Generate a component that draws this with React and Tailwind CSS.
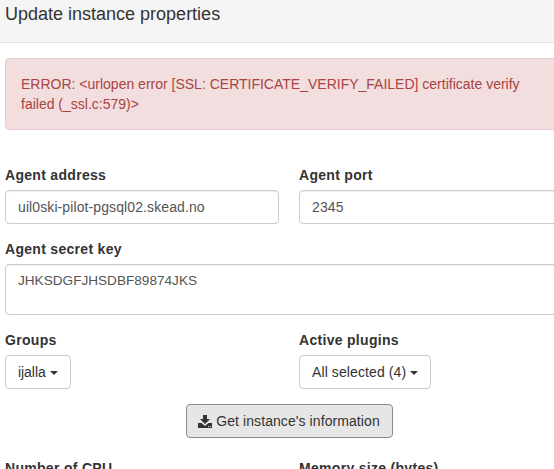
import React from 'react';

const Caret = () => (
  <span className="inline-block align-middle w-0 h-0 border-x-4 border-x-transparent border-t-4 border-t-[#333]" />
);

const SaveIcon = () => (
  <svg width="14" height="13" viewBox="0 0 14 13" className="mr-[4px] -ml-[1px]" fill="#333">
    <path d="M5 0h4v4h3L7 9 2 4h3z" />
    <path d="M0 8h3.5L7 11l3.5-3H14v5H0z" />
    <rect x="10" y="11" width="1" height="1" fill="#e6e6e6" />
    <rect x="12" y="11" width="1" height="1" fill="#e6e6e6" />
  </svg>
);

function Field({ label, value }) {
  return (
    <div>
      <label className="block mb-[5px] text-sm leading-5 font-bold tracking-[0.3px] text-[#333]">{label}</label>
      <input
        readOnly
        value={value}
        className="block w-full h-[34px] px-3 py-1.5 text-sm tracking-[0.1px] text-[#555] bg-white border border-[#ccc] rounded shadow-[inset_0_1px_1px_rgba(0,0,0,0.075)] outline-none"
      />
    </div>
  );
}

function Dropdown({ label, value, className }) {
  return (
    <div>
      <label className="block mb-[5px] text-sm leading-5 font-bold tracking-[0.3px] text-[#333]">{label}</label>
      <button className={`h-[34px] px-3 text-sm text-[#333] bg-white border border-[#ccc] rounded ${className}`}>
        {value} <Caret />
      </button>
    </div>
  );
}

export default function App() {
  return (
    <div className="w-[554px] h-[469px] overflow-hidden bg-white font-['Liberation_Sans',Arial,sans-serif]">
      <div className="h-[43px] px-[5px] pt-[3px] bg-[#f5f5f5] border-b border-[#e3e3e3] text-lg leading-[22px] text-[#333]">
        Update instance properties
      </div>

      <div className="w-[568px] ml-[5px]">
        <div className="mt-[15px] pl-[15px] pr-[40px] py-[15px] text-sm leading-5 text-[#a94442] bg-[#f2dede] border border-[#ebccd1] rounded">
          ERROR: &lt;urlopen error [SSL: CERTIFICATE_VERIFY_FAILED] certificate verify failed (_ssl.c:579)&gt;
        </div>

        <div className="mt-[35px] grid grid-cols-2 gap-x-5">
          <Field label="Agent address" value="uil0ski-pilot-pgsql02.skead.no" />
          <Field label="Agent port" value="2345" />
        </div>

        <div className="mt-[15px]">
          <label className="block mb-[5px] text-sm leading-5 font-bold tracking-[0.3px] text-[#333]">Agent secret key</label>
          <textarea
            readOnly
            value="JHKSDGFJHSDBF89874JKS"
            className="block w-full h-[51px] px-3 py-1.5 text-[13.6px] leading-5 text-[#555] bg-white border border-[#ccc] rounded shadow-[inset_0_1px_1px_rgba(0,0,0,0.075)] outline-none resize-none"
          />
        </div>

        <div className="mt-[15px] grid grid-cols-2 gap-x-5">
          <Dropdown label="Groups" value="ijalla" className="tracking-[-0.05px]" />
          <Dropdown label="Active plugins" value="All selected (4)" className="tracking-[0.1px]" />
        </div>
      </div>

      <div className="mt-[15px] flex justify-center w-[579px]">
        <button className="flex items-center h-[34px] px-3 text-sm tracking-[0.08px] text-[#333] bg-[#e6e6e6] border border-[#8c8c8c] rounded">
          <SaveIcon />
          Get instance's information
        </button>
      </div>

      <div className="w-[568px] ml-[5px] mt-5 grid grid-cols-2 gap-x-5">
        <label className="block text-sm leading-5 font-bold tracking-[0.3px] text-[#333]">Number of CPU</label>
        <label className="block text-sm leading-5 font-bold tracking-[0.3px] text-[#333]">Memory size (bytes)</label>
      </div>
    </div>
  );
}
